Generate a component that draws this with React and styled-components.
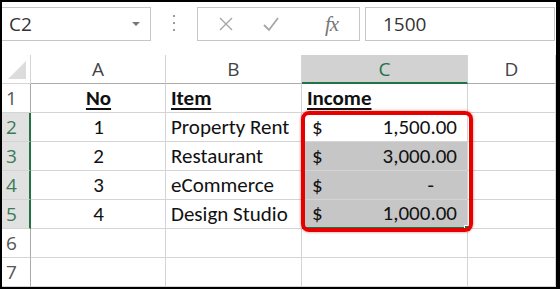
import React from 'react';
import styled, { createGlobalStyle } from 'styled-components';

const GlobalStyle = createGlobalStyle`
  html, body {
    margin: 0;
    padding: 0;
    background: #000;
  }
  * {
    box-sizing: border-box;
  }
`;

const Frame = styled.div`
  width: 560px;
  height: 289px;
  background: #000;
  padding: 2px 4px 2px 2px;
  overflow: hidden;
`;

const Sheet = styled.div`
  width: 100%;
  height: 100%;
  background: #fff;
  overflow: hidden;
  display: flex;
  flex-direction: column;
`;

const FormulaBar = styled.div`
  display: flex;
  align-items: flex-end;
  height: 39px;
`;

const NameBox = styled.div`
  position: relative;
  width: 150px;
  height: 34px;
  margin-left: -1px;
  border: 1px solid #c6c6c6;
  display: flex;
  align-items: center;
  padding-left: 7px;
  font-family: "Open Sans", "Noto Sans", sans-serif;
  font-size: 19px;
  color: #333;
`;

const Caret = styled.span`
  position: absolute;
  right: 10px;
  top: 14px;
  width: 0;
  height: 0;
  border-left: 4px solid transparent;
  border-right: 4px solid transparent;
  border-top: 4px solid #777;
`;

const Grip = styled.div`
  width: 46px;
  height: 34px;
  display: flex;
  flex-direction: column;
  align-items: center;
  justify-content: center;
  gap: 5px;
  padding-bottom: 2px;

  span {
    width: 2px;
    height: 2px;
    background: #9a9a9a;
  }
`;

const ToolBox = styled.div`
  width: 163px;
  height: 34px;
  border: 1px solid #c6c6c6;
  display: flex;
  align-items: center;
`;

const ToolIcon = styled.div`
  width: ${p => p.$w}px;
  height: 100%;
  display: flex;
  align-items: center;
  justify-content: center;
  padding-left: ${p => p.$shift || 0}px;
`;

const Fx = styled.span`
  font-family: "Liberation Serif", serif;
  font-style: italic;
  font-size: 21px;
  color: #777;
  letter-spacing: -1px;
`;

const FormulaInput = styled.div`
  margin-left: 5px;
  width: 190px;
  height: 34px;
  border: 1px solid #c6c6c6;
  display: flex;
  align-items: center;
  padding-left: 17px;
  font-family: "Open Sans", "Noto Sans", sans-serif;
  font-size: 19px;
  color: #333;
`;

const GridWrap = styled.div`
  position: relative;
  margin-top: 14px;
`;

const Grid = styled.div`
  display: grid;
  grid-template-columns: 29px 135px 136px 166px 1fr;
  grid-auto-rows: 29px;
`;

const Corner = styled.div`
  border-right: 1px solid #d4d4d4;
  border-bottom: 1px solid #d4d4d4;
  position: relative;

  &::after {
    content: '';
    position: absolute;
    right: 4px;
    bottom: 4px;
    width: 0;
    height: 0;
    border-left: 18px solid transparent;
    border-bottom: 18px solid #dcdcdc;
  }
`;

const ColHead = styled.div`
  display: flex;
  align-items: center;
  justify-content: center;
  font-family: "Open Sans", "Noto Sans", sans-serif;
  font-size: 19px;
  color: ${p => (p.$active ? '#217346' : '#444')};
  background: ${p => (p.$active ? '#d2d2d2' : '#fff')};
  border-right: 1px solid #d4d4d4;
  border-bottom: ${p => (p.$active ? '2px solid #217346' : '1px solid #ababab')};
`;

const RowHead = styled.div`
  display: flex;
  align-items: center;
  padding-left: 4px;
  font-family: "Open Sans", "Noto Sans", sans-serif;
  font-size: 19px;
  color: ${p => (p.$active ? '#3b7a57' : '#555')};
  background: ${p => (p.$active ? '#e1e1e1' : '#fff')};
  border-bottom: 1px solid #d4d4d4;
  border-right: ${p => (p.$active ? '2px solid #217346' : '1px solid #ababab')};
`;

const Cell = styled.div`
  display: flex;
  align-items: flex-end;
  justify-content: ${p => p.$align || 'flex-start'};
  padding: 0 4px 1px 5px;
  font-family: "Carlito", "Lato", sans-serif;
  font-size: 21px;
  line-height: 26px;
  color: #111;
  background: ${p => (p.$sel ? '#c6c6c6' : '#fff')};
  border-right: 1px solid #d4d4d4;
  border-bottom: 1px solid #d4d4d4;
  white-space: nowrap;
`;

const Heading = styled.span`
  font-weight: 700;
  text-decoration: underline;
  text-underline-offset: 3px;
`;

const Money = styled(Cell)`
  justify-content: space-between;
  padding: 0 10px 1px 10px;
  border-bottom: ${p => (p.$last ? '2px solid #217346' : '1px solid #d4d4d4')};
  position: relative;
`;

const Dash = styled.span`
  padding-right: 23px;
`;

const Handle = styled.span`
  position: absolute;
  right: -4px;
  bottom: -5px;
  width: 7px;
  height: 7px;
  background: #217346;
  border: 1px solid #fff;
`;

const Callout = styled.div`
  position: absolute;
  left: 299px;
  top: 56px;
  width: 172px;
  height: 121px;
  border: 4px solid #e60000;
  border-radius: 8px;
  box-shadow: 0 0 3px rgba(200, 0, 0, 0.5);
  pointer-events: none;
`;

const rows = [
  { no: '1', item: 'Property Rent', amount: '1,500.00' },
  { no: '2', item: 'Restaurant', amount: '3,000.00' },
  { no: '3', item: 'eCommerce', amount: null },
  { no: '4', item: 'Design Studio', amount: '1,000.00' },
];

const CrossIcon = () => (
  <svg width="16" height="16" viewBox="0 0 16 16">
    <path d="M2 2 L14 14 M14 2 L2 14" stroke="#a6a6a6" strokeWidth="1.4" fill="none" />
  </svg>
);

const CheckIcon = () => (
  <svg width="18" height="16" viewBox="0 0 18 16">
    <path d="M2 9 L7 14 L16 2" stroke="#a6a6a6" strokeWidth="1.8" fill="none" />
  </svg>
);

const App = () => {
  return (
    <Frame>
      <GlobalStyle />
      <Sheet>
        <FormulaBar>
          <NameBox>
            C2
            <Caret />
          </NameBox>
          <Grip>
            <span />
            <span />
            <span />
          </Grip>
          <ToolBox>
            <ToolIcon $w={56}><CrossIcon /></ToolIcon>
            <ToolIcon $w={34}><CheckIcon /></ToolIcon>
            <ToolIcon $w={71} $shift={16}><Fx>fx</Fx></ToolIcon>
          </ToolBox>
          <FormulaInput>1500</FormulaInput>
        </FormulaBar>

        <GridWrap>
          <Grid>
            <Corner />
            <ColHead>A</ColHead>
            <ColHead>B</ColHead>
            <ColHead $active>C</ColHead>
            <ColHead>D</ColHead>

            <RowHead>1</RowHead>
            <Cell $align="center"><Heading>No</Heading></Cell>
            <Cell><Heading>Item</Heading></Cell>
            <Cell><Heading>Income</Heading></Cell>
            <Cell />

            {rows.map((r, i) => (
              <React.Fragment key={r.no}>
                <RowHead $active>{i + 2}</RowHead>
                <Cell $align="center">{r.no}</Cell>
                <Cell>{r.item}</Cell>
                <Money $sel={i > 0} $last={i === rows.length - 1}>
                  <span>$</span>
                  {r.amount ? <span>{r.amount}</span> : <Dash>-</Dash>}
                  {i === rows.length - 1 && <Handle />}
                </Money>
                <Cell />
              </React.Fragment>
            ))}

            {[6, 7].map(n => (
              <React.Fragment key={n}>
                <RowHead>{n}</RowHead>
                <Cell />
                <Cell />
                <Cell />
                <Cell />
              </React.Fragment>
            ))}
          </Grid>
          <Callout />
        </GridWrap>
      </Sheet>
    </Frame>
  );
};

export default App;
